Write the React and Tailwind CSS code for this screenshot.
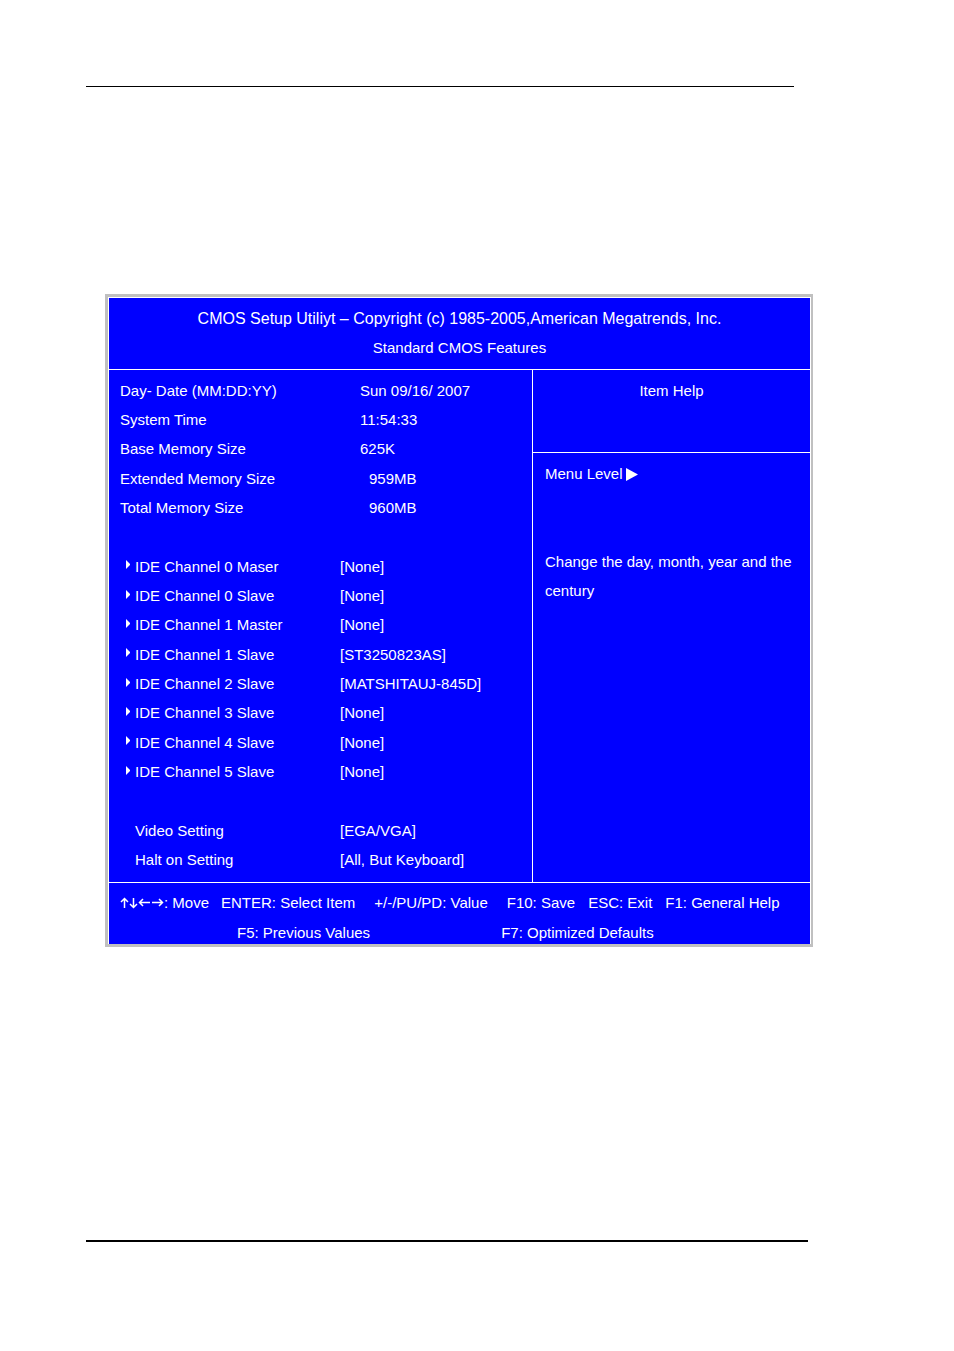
import clsx from 'clsx'

const systemInfo = [
  { label: 'Day- Date (MM:DD:YY)', value: 'Sun 09/16/ 2007' },
  { label: 'System Time', value: '11:54:33' },
  { label: 'Base Memory Size', value: '625K' },
  { label: 'Extended Memory Size', value: '959MB', indent: true },
  { label: 'Total Memory Size', value: '960MB', indent: true },
]

const channels = [
  { label: 'IDE Channel 0 Maser', value: '[None]' },
  { label: 'IDE Channel 0 Slave', value: '[None]' },
  { label: 'IDE Channel 1 Master', value: '[None]' },
  { label: 'IDE Channel 1 Slave', value: '[ST3250823AS]' },
  { label: 'IDE Channel 2 Slave', value: '[MATSHITAUJ-845D]' },
  { label: 'IDE Channel 3 Slave', value: '[None]' },
  { label: 'IDE Channel 4 Slave', value: '[None]' },
  { label: 'IDE Channel 5 Slave', value: '[None]' },
]

const settings = [
  { label: 'Video Setting', value: '[EGA/VGA]' },
  { label: 'Halt on Setting', value: '[All, But Keyboard]' },
]

function Marker() {
  return (
    <svg className="w-1 h-[9px] mb-1" viewBox="0 0 4 9" fill="currentColor" aria-hidden="true">
      <path d="M0 0L4 4V5L0 9Z" />
    </svg>
  )
}

function Arrows() {
  return (
    <svg
      className="w-11 h-3 shrink-0"
      viewBox="0 0 44 12"
      fill="none"
      stroke="currentColor"
      strokeWidth="1.5"
      role="img"
      aria-label="Arrow keys"
    >
      <path d="M4.5 11V1.5M1 5L4.5 1.5L8 5" />
      <path d="M13.5 1V10.500M10 7L13.5 10.500L17 7" />
      <path d="M30 5.500H20M23 2L19.500 5.500L23 9" />
      <path d="M32 5.500H42M39 2L42.500 5.500L39 9" />
    </svg>
  )
}

function Row({ label, value, indent, marker, item }) {
  return (
    <tr>
      <th scope="row" className="p-0 font-normal text-left">
        <span className="flex items-center">
          {item && <span className="w-[15px] pl-[6px]">{marker && <Marker />}</span>}
          {label}
        </span>
      </th>
      <td className={clsx('p-0', !item && (indent ? 'pl-[29px]' : 'pl-5'))}>{value}</td>
    </tr>
  )
}

function Spacer() {
  return (
    <tr aria-hidden="true">
      <td colSpan={2} className="p-0">&nbsp;</td>
    </tr>
  )
}

export default function App() {
  return (
    <div className="bg-white pt-[86px] pb-[109px] pl-[86px] pr-[141px] font-['Liberation_Sans',Arial,sans-serif] text-[15px] leading-5 text-white">
      <hr className="mr-[19px] border-t border-black" />

      <main className="mt-[207px] ml-[19px] border-[3px] border-r-2 border-[#c0c0c0]">
        <div className="border border-b-0 border-white bg-[#0000ff]">
          <header className="h-[71px] pt-[11px] text-center">
            <h1 className="text-base leading-5">
              CMOS Setup Utiliyt – Copyright (c) 1985-2005,American Megatrends, Inc.
            </h1>
            <h2 className="mt-[9px]">Standard CMOS Features</h2>
          </header>

          <div className="flex border-y border-white">
            <section className="flex-1 pt-[6px] pb-[7px] pl-[11px]">
              <table className="w-full h-[499px] table-fixed border-collapse">
                <colgroup>
                  <col className="w-[220px]" />
                  <col />
                </colgroup>
                <tbody>
                  {systemInfo.map(row => (
                    <Row key={row.label} {...row} />
                  ))}
                  <Spacer />
                  {channels.map(row => (
                    <Row key={row.label} {...row} item marker />
                  ))}
                  <Spacer />
                  {settings.map(row => (
                    <Row key={row.label} {...row} item />
                  ))}
                </tbody>
              </table>
            </section>

            <aside className="w-[278px] border-l border-white">
              <h3 className="h-[83px] pt-[11px] border-b border-white text-center">Item Help</h3>
              <div className="px-3 pt-[11px]">
                <p className="flex items-center gap-[3px]">
                  Menu Level
                  <svg className="w-3 h-[13px]" viewBox="0 0 12 13" fill="currentColor" aria-hidden="true">
                    <path d="M0 0L12 6.500L0 13Z" />
                  </svg>
                </p>
                <p className="mt-[63px] leading-[29px]">Change the day, month, year and the century</p>
              </div>
            </aside>
          </div>

          <footer className="h-[61px] pt-[10px] pl-[11px] whitespace-nowrap">
            <div className="flex">
              <span className="flex items-center mr-3">
                <Arrows />: Move
              </span>
              <span className="mr-[19px]">ENTER: Select Item</span>
              <span className="mr-[19px]">+/-/PU/PD: Value</span>
              <span className="mr-[13px]">F10: Save</span>
              <span className="mr-[13px]">ESC: Exit</span>
              <span>F1: General Help</span>
            </div>
            <div className="flex mt-[10px] pl-[117px]">
              <span className="mr-[131px]">F5: Previous Values</span>
              <span>F7: Optimized Defaults</span>
            </div>
          </footer>
        </div>
      </main>

      <hr className="mt-[293px] mr-[5px] border-t-2 border-black" />
    </div>
  )
}
